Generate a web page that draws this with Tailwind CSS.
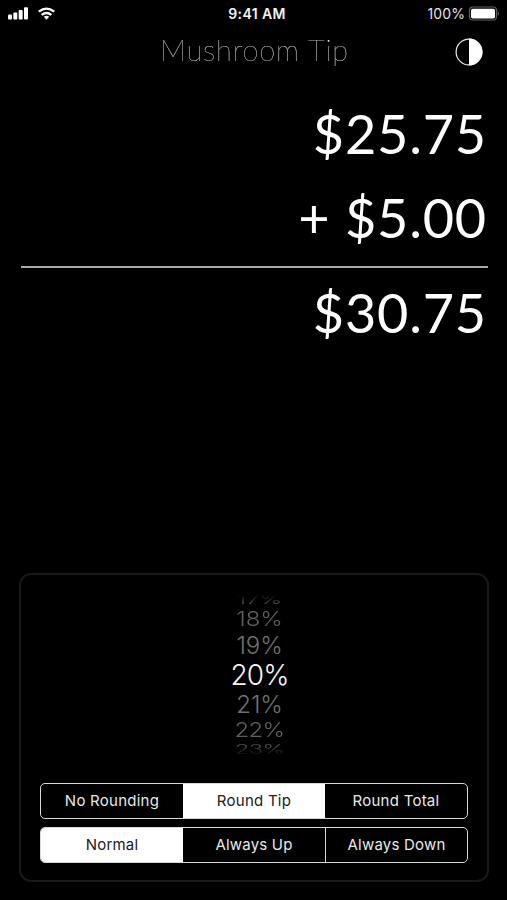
<!DOCTYPE html>
<html lang="en">
<head>
<meta charset="utf-8">
<title>Mushroom Tip</title>
<script src="https://cdn.jsdelivr.net/npm/@tailwindcss/browser@4"></script>
</head>
<body class="bg-black">
<main class="relative flex h-[900px] w-[507px] flex-col overflow-hidden bg-black font-['Inter',sans-serif] text-white">
  <div class="grid h-[27px] grid-cols-3 items-center pr-[7px] pl-2">
    <div class="flex items-center gap-[9px]">
      <svg width="21" height="13" viewBox="0 0 21 13" fill="#fff"><rect x="0" y="7.5" width="4" height="5" rx="1"/><rect x="5.3" y="5.5" width="4" height="7" rx="1"/><rect x="10.7" y="3" width="4" height="9.5" rx="1"/><rect x="16" y="0.3" width="4" height="12.2" rx="1"/></svg>
      <svg width="17" height="13" viewBox="0 0 17 13" fill="none" stroke="#fff" stroke-width="2.3"><path d="M.8 4.7Q8.500-1.500 16.200 4.700M3.600 7.900Q8.500 4 13.400 7.900"/><path d="M5.800 9.800Q8.500 7.900 11.200 9.800L8.500 12.700Z" fill="#fff" stroke="none"/></svg>
    </div>
    <div class="pt-px pl-[6px] text-center text-[14px] leading-none font-semibold tracking-[0.4px] whitespace-nowrap text-[#f2f2f2]">9:41 AM</div>
    <div class="flex items-center justify-end gap-[3px]">
      <span class="pt-px text-[14px] leading-none tracking-[0.1px] text-[#e4e4e4]">100%</span>
      <svg width="32" height="16" viewBox="0 0 32 16"><rect x="1.500" y="1" width="27" height="13" rx="3.500" fill="none" stroke="#626262" stroke-width="1.200"/><rect x="3" y="2.700" width="24" height="9.800" rx="1.800" fill="#fff"/><path d="M29.800 5Q31.800 7.500 29.800 10Z" fill="#777"/></svg>
    </div>
  </div>

  <header class="relative flex h-[50px] items-center justify-center pb-[5px]">
    <h1 class="pl-px font-['Lato',sans-serif] text-[29px] leading-none font-thin tracking-[0.85px] whitespace-nowrap text-white opacity-[0.99] will-change-transform [-webkit-text-stroke:0.2px_#999]">Mushroom Tip</h1>
    <svg class="absolute top-[10px] left-[454px]" width="30" height="30" viewBox="0 0 30 30"><circle cx="15" cy="15" r="12.900" fill="#000" stroke="#e8e8e8" stroke-width="1.200"/><path d="M15 1.500a13.500 13.500 0 0 1 0 27Z" fill="#fff"/></svg>
  </header>

  <section class="flex flex-col items-end pt-[15px] pr-[19px] pl-[21px] font-['Lato',sans-serif] text-[54px] whitespace-nowrap">
    <div class="h-[84px] pr-px leading-[84px] tracking-[0.8px]">$25.75</div>
    <div class="h-[84px] pr-px leading-[84px] tracking-[0.8px]">+ $5.00</div>
    <div class="mt-[6px] h-[2px] w-full bg-[#aaa]"></div>
    <div class="mt-[3px] h-[84px] pr-px leading-[84px] tracking-[0.8px]">$30.75</div>
  </section>

  <section class="mt-auto mr-[18px] mb-[18px] ml-[19px] flex h-[309px] flex-col rounded-[12px] border-2 border-[#191919] pr-[19px] pl-[19px]">
    <div class="flex h-[208px] flex-col items-center pt-[19px] pl-[11px] leading-none whitespace-nowrap">
      <div class="flex h-[11px] items-center text-[24px] font-light text-[#606060]"><span class="scale-y-[0.52] [mask-image:linear-gradient(transparent_5%,black_95%)]">17%</span></div>
      <div class="flex h-[28px] items-center text-[24px] font-light text-[#606060]"><span class="scale-y-[0.85]">18%</span></div>
      <div class="flex h-[25px] items-center text-[24px] font-light tracking-[-0.1px] text-[#707070]"><span>19%</span></div>
      <div class="flex h-[34px] items-center text-[28px] font-light tracking-[-0.9px] text-[#f4f4f4]"><span>20%</span></div>
      <div class="flex h-[25px] items-center text-[24px] font-light tracking-[-0.1px] text-[#707070]"><span>21%</span></div>
      <div class="flex h-[26px] items-center text-[24px] font-light tracking-[-0.7px] text-[#606060]"><span class="scale-y-[0.82]">22%</span></div>
      <div class="flex h-[13px] items-center text-[24px] font-light tracking-[-0.7px] text-[#505050]"><span class="scale-y-[0.55] [mask-image:linear-gradient(black_20%,transparent_95%)]">23%</span></div>
    </div>
    <div class="grid h-[36px] w-[428px] shrink-0 grid-cols-3 overflow-hidden rounded-[5px] border-[1.500px] border-[#d8d8d8] text-[15px] tracking-[0.25px] text-[#e8e8e8]">
      <div class="flex items-center justify-center">No Rounding</div>
      <div class="flex items-center justify-center bg-white text-[#202020]">Round Tip</div>
      <div class="flex items-center justify-center">Round Total</div>
    </div>
    <div class="mt-2 grid h-[36px] w-[428px] shrink-0 grid-cols-3 overflow-hidden rounded-[5px] border-[1.500px] border-[#d8d8d8] text-[15px] tracking-[0.2px] text-[#e8e8e8]">
      <div class="flex items-center justify-center bg-white text-[#202020]">Normal</div>
      <div class="flex items-center justify-center">Always Up</div>
      <div class="flex items-center justify-center border-l border-[#d8d8d8]">Always Down</div>
    </div>
  </section>
</main>
</body>
</html>
